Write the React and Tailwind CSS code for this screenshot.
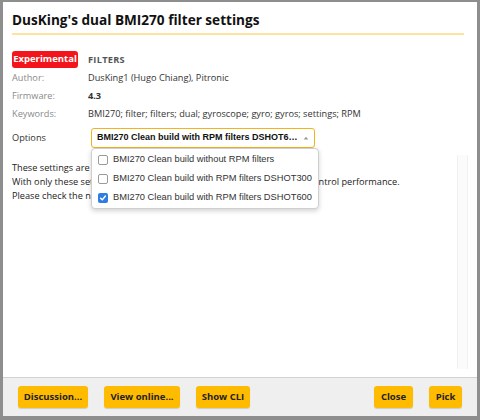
import React from 'react';

const options = [
  { label: 'BMI270 Clean build without RPM filters', checked: false },
  { label: 'BMI270 Clean build with RPM filters DSHOT300', checked: false },
  { label: 'BMI270 Clean build with RPM filters DSHOT600', checked: true },
];

function Checkbox({ checked }) {
  if (checked) {
    return (
      <span className="w-[10px] h-[10px] rounded-[2px] bg-[#2f7de1] flex items-center justify-center shrink-0">
        <svg width="8" height="8" viewBox="0 0 10 10">
          <path d="M2 5.2 L4.1 7.3 L8 2.6" fill="none" stroke="white" strokeWidth="1.8" strokeLinecap="round" strokeLinejoin="round" />
        </svg>
      </span>
    );
  }
  return <span className="w-[10px] h-[10px] rounded-[2px] border border-[#9a9a9a] bg-white shrink-0" />;
}

function MetaRow({ label, children }) {
  return (
    <div className="flex items-center h-[18px] text-[9.2px]">
      <span className="w-[76px] text-[#8a8a8a]">{label}</span>
      <span className="text-[#333]">{children}</span>
    </div>
  );
}

function FooterButton({ children, w }) {
  return (
    <button className={`${w} h-[22px] rounded-[3px] bg-[#ffbb00] text-[9.5px] font-bold text-[#222] shadow-[0_1px_1px_rgba(0,0,0,0.15)] flex items-center justify-center whitespace-nowrap`}>
      {children}
    </button>
  );
}

export default function App() {
  return (
    <div className="w-[480px] h-[420px] bg-[#8e8e8e] pt-[2px] pl-[3px] pr-[3px] pb-[4px] font-['Open_Sans',sans-serif]">
      <div className="w-full h-full bg-white flex flex-col">
        {/* Header */}
        <div className="px-[9px] pt-[8px]">
          <h1 className="text-[13.6px] font-bold text-[#111] leading-[20px]">DusKing's dual BMI270 filter settings</h1>
          <div className="mt-[3px] h-[2px] bg-[#ffe2a0] mr-[4px]" />
        </div>

        {/* Details */}
        <div className="px-[9px] pt-[15px]">
          <div className="flex items-center h-[19px]">
            <span className="w-[66px] h-[17px] rounded-[3px] bg-[#f3151c] text-white text-[9.5px] font-bold flex items-center justify-center">Experimental</span>
            <span className="ml-[10px] text-[9.2px] font-bold text-[#555] tracking-[0.3px]">FILTERS</span>
          </div>
          <MetaRow label="Author:">DusKing1 (Hugo Chiang), Pitronic</MetaRow>
          <MetaRow label="Firmware:"><span className="font-bold">4.3</span></MetaRow>
          <MetaRow label="Keywords:">BMI270; filter; filters; dual; gyroscope; gyro; gyros; settings; RPM</MetaRow>

          <div className="relative flex items-center mt-[5px] h-[20px] text-[9.2px]">
            <span className="w-[79px] text-[#333]">Options</span>
            <div className="w-[224px] h-[20px] rounded-[3px] border border-[#f2b31c] bg-white flex items-center pl-[5px] pr-[5px] font-['Liberation_Sans',sans-serif]">
              <span className="flex-1 truncate text-[9px] font-bold text-[#111]">BMI270 Clean build with RPM filters DSHOT600</span>
              <svg width="6" height="4" viewBox="0 0 7 5" className="ml-[5px] shrink-0">
                <path d="M0.5 4.5 L3.5 0.8 L6.5 4.5 Z" fill="#999" />
              </svg>
            </div>

            {/* Dropdown */}
            <div className="absolute left-[79px] top-[20px] w-[228px] z-10 bg-white border border-[#cfcfcf] rounded-[4px] shadow-[0_2px_5px_rgba(0,0,0,0.18)] py-[1px] font-['Liberation_Sans',sans-serif]">
              {options.map((o) => (
                <div key={o.label} className="flex items-center h-[19px] pl-[6px] gap-[5px] text-[9.3px] text-[#333] whitespace-nowrap">
                  <Checkbox checked={o.checked} />
                  <span>{o.label}</span>
                </div>
              ))}
            </div>
          </div>
        </div>

        {/* Body */}
        <div className="flex-1 flex mt-[7px] min-h-0">
          <div className="flex-1 pl-[9px] pt-[6px] text-[9.2px] leading-[14px] text-[#222] whitespace-nowrap">
            <p>These settings are aimed at builds using dual BMI270 gyros.</p>
            <p>With only these settings applied, you should get really excellent flight control performance.</p>
            <p>Please check the notes before flying.</p>
          </div>
          <div className="w-[11px] mr-[9px] mb-[8px] bg-[#fbfbfb] border-l border-r border-[#f0f0f0]" />
        </div>

        {/* Footer */}
        <div className="h-[39px] border-t border-[#d2d2d2] bg-[#efefef] flex items-center px-[15px]">
          <div className="flex gap-[16px]">
            <FooterButton w="w-[70px]">Discussion...</FooterButton>
            <FooterButton w="w-[76px]">View online...</FooterButton>
            <FooterButton w="w-[54px]">Show CLI</FooterButton>
          </div>
          <div className="ml-auto flex gap-[16px]">
            <FooterButton w="w-[39px]">Close</FooterButton>
            <FooterButton w="w-[33px]">Pick</FooterButton>
          </div>
        </div>
      </div>
    </div>
  );
}
